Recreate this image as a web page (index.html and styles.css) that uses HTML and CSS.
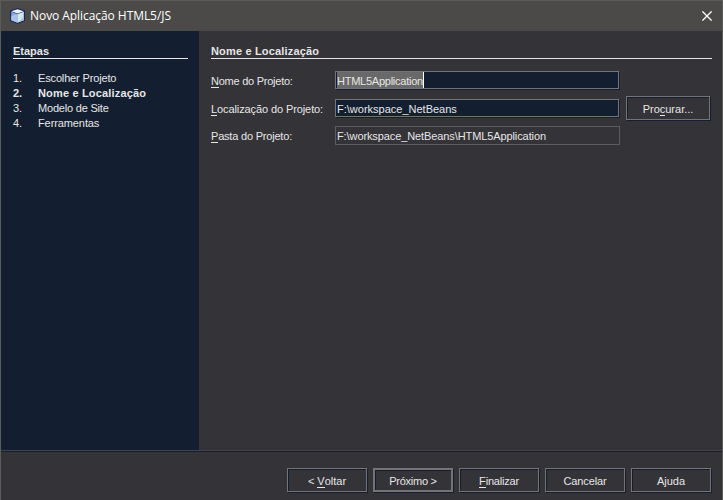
FILE: index.html
```html
<!DOCTYPE html>
<html lang="pt-BR">
<head>
<meta charset="utf-8">
<title>Novo Aplicação HTML5/JS</title>
<link rel="stylesheet" href="styles.css">
</head>
<body>
<div class="window">
  <header class="titlebar">
    <svg class="logo" width="16" height="16" viewBox="0 0 16 16">
      <path d="M7.500 0 15 2.500v10.500L7.500 16 0 13V2.500z" fill="#1b2657"/>
      <path d="M7.500 1.200 13.800 3.200 7.500 5.600 1.200 3.200z" fill="#e8f4fa"/>
      <path d="M1.200 3.700 7.500 5.900v8.800L1.200 12.300z" fill="#86a8dc"/>
      <path d="M1.200 8 7.500 5.900v8.800L1.200 12.300z" fill="#a9c3ea"/>
      <path d="M7.500 5.900 13.800 3.700v8.600L7.500 14.700z" fill="#d3e6ec"/>
      <path d="M9 14 13.800 8v4.300z" fill="#a8c4d6"/>
    </svg>
    <h1 class="title">Novo Aplicação HTML5/JS</h1>
    <svg class="close" width="10" height="10" viewBox="0 0 10 10"><path d="M.4.4 9.600 9.600M9.600.4.4 9.600" stroke="#fff" stroke-width="1.300"/></svg>
  </header>
  <div class="content">
    <aside class="steps">
      <h2 class="heading">Etapas</h2>
      <ol class="list">
        <li><span class="num">1.</span><span class="snug">Escolher Projeto</span></li>
        <li class="current"><span class="num">2.</span><span class="loose">Nome e Localização</span></li>
        <li><span class="num">3.</span><span class="tight">Modelo de Site</span></li>
        <li><span class="num">4.</span><span class="near">Ferramentas</span></li>
      </ol>
    </aside>
    <main class="panel">
      <h2 class="heading loose">Nome e Localização</h2>
      <div class="form">
        <label class="label tighter"><u>N</u>ome do Projeto:</label>
        <div class="field"><span class="selected tighter">HTML5Application</span></div>
        <label class="label near"><u>L</u>ocalização do Projeto:</label>
        <div class="field"><span>F:\workspace_NetBeans</span></div>
        <div class="button browse"><span>Pro<u>c</u>urar...</span></div>
        <label class="label tight"><u>P</u>asta do Projeto:</label>
        <div class="field readonly"><span class="near">F:\workspace_NetBeans\HTML5Application</span></div>
      </div>
    </main>
  </div>
  <footer class="footer">
    <div class="button"><span>&lt; <u>V</u>oltar</span></div>
    <div class="button default"><span class="tighter">Próximo &gt;</span></div>
    <div class="button"><span class="tight"><u>F</u>inalizar</span></div>
    <div class="button"><span class="near">Cancelar</span></div>
    <div class="button"><span>Ajuda</span></div>
  </footer>
</div>
</body>
</html>
```
FILE: styles.css
```css
* { box-sizing: border-box; }
body {
  margin: 0;
  background: #343338;
  color: #e6e6e6;
  font: 11px/15px "Liberation Sans", Arial, sans-serif;
}
.window {
  width: 723px;
  height: 500px;
  display: flex;
  flex-direction: column;
  border: 1px solid #5b5b59;
  border-bottom: 0;
  overflow: hidden;
}
.titlebar {
  height: 30px;
  flex: none;
  display: flex;
  align-items: center;
  padding: 0 10px 0 9px;
  background: #4b4a48;
}
.logo { margin-right: 4px; }
.title {
  margin: 0;
  flex: 1;
  font: 12px/16px "Open Sans", "Noto Sans", sans-serif;
  color: #fff;
  letter-spacing: -0.060px;
}
.loose { letter-spacing: 0.170px; }
.near { letter-spacing: -0.100px; }
.snug { letter-spacing: -0.150px; }
.tight { letter-spacing: -0.200px; }
.tighter { letter-spacing: -0.250px; }
.content { height: 419px; flex: none; display: flex; }
.steps { width: 198px; padding: 13px 11px 0 12px; background: #131f31; }
.panel { flex: 1; padding: 13px 10px 0 12px; }
.heading {
  height: 15px;
  margin: 0;
  border-bottom: 1px solid #e6e6e6;
  font-size: 11px;
  line-height: 14px;
  font-weight: bold;
}
.list { list-style: none; margin: 12px 0 0; padding: 0; }
.list li { display: flex; height: 15px; }
.num { width: 25px; }
.current { font-weight: bold; }
u { text-decoration: none; box-shadow: 0 -1px 0 #e6e6e6 inset; display: inline-block; height: 13px; line-height: 13px; }
.form {
  display: grid;
  grid-template-columns: 124px 284px 84px;
  grid-template-rows: 20px 24px 19px;
  row-gap: 6px;
  margin-top: 11px;
  align-items: center;
}
.label { grid-column: 1; padding-top: 2px; white-space: nowrap; }
.field {
  grid-column: 2;
  height: 18px;
  padding: 0 1px;
  line-height: 18px;
  background: #131f31;
  border: 1px solid #747474;
  box-shadow: 1px 1px 0 #131f31, inset 1px 1px 0 #131f31;
  white-space: nowrap;
}
.selected { display: inline-block; height: 16px; line-height: 18px; background: #696969; border-right: 1px solid #fff; }
.readonly { width: 285px; height: 19px; line-height: 19px; background: none; border-color: #5d5c60; box-shadow: none; }
.button {
  width: 80px;
  height: 24px;
  display: flex;
  justify-content: center;
  align-items: center;
  padding-top: 2px;
  border: 1px solid #747474;
  box-shadow: 1px 1px 0 #131f31, inset 1px 1px 0 #131f31;
  white-space: nowrap;
}
.browse { grid-column: 3; width: 84px; margin-left: 7px; }
.default { border-width: 2px; }
.footer {
  flex: 1;
  display: flex;
  justify-content: flex-end;
  gap: 6px;
  padding: 17px 11px 0 0;
  border-top: 1px solid #444347;
  box-shadow: inset 0 1px 0 #131f31;
}
```
